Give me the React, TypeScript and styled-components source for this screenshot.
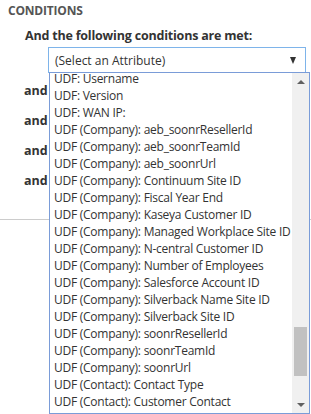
import React from 'react';
import styled, { createGlobalStyle } from 'styled-components';

const GlobalStyle = createGlobalStyle`
  html, body {
    margin: 0;
    padding: 0;
    background: #ffffff;
    font-family: "Open Sans", "Noto Sans", Arial, sans-serif;
    overflow: hidden;
  }
`;

const Page = styled.div`
  width: 311px;
  height: 414px;
  position: relative;
  overflow: hidden;
`;

const SectionTitle = styled.h2`
  margin: 0;
  padding: 2px 0 0 8px;
  height: 20px;
  font-size: 12px;
  font-weight: 700;
  color: #555555;
  letter-spacing: -0.2px;
`;

const Subtitle = styled.h3`
  margin: 0;
  padding: 5px 0 0 25px;
  height: 20px;
  font-size: 12.5px;
  font-weight: 700;
  color: #333333;
  letter-spacing: -0.2px;
`;

const SelectArea = styled.div`
  position: relative;
  margin: 0 0 0 48px;
  width: 258px;
`;

const SelectBox = styled.div`
  box-sizing: border-box;
  height: 26px;
  border: 1px solid #7eb4ea;
  display: flex;
  align-items: center;
  justify-content: space-between;
  padding: 0 6px 0 6px;
  font-size: 12px;
  color: #333333;
  background: #ffffff;
`;

const Caret = styled.span`
  width: 0;
  height: 0;
  border-left: 3.5px solid transparent;
  border-right: 3.5px solid transparent;
  border-top: 7px solid #333333;
  margin-right: 3px;
`;

const Dropdown = styled.div`
  position: absolute;
  z-index: 10;
  left: 1px;
  top: 25px;
  width: 261px;
  height: 342px;
  box-sizing: border-box;
  border: 1px solid #7a9cd8;
  background: #ffffff;
  display: flex;
  overflow: hidden;
`;

const OptionList = styled.ul`
  list-style: none;
  margin: -3px 0 0 0;
  padding: 0;
  flex: 1;
  overflow: hidden;
`;

const OptionItem = styled.li`
  height: 17px;
  line-height: 17px;
  padding-left: 4px;
  font-size: 12px;
  color: #333333;
  white-space: nowrap;
  letter-spacing: -0.25px;
`;

const Scrollbar = styled.div`
  width: 17px;
  background: #f0f0f0;
  display: flex;
  flex-direction: column;
  align-items: center;
`;

const ScrollArrow = styled.div<{ $up?: boolean }>`
  height: 17px;
  display: flex;
  align-items: center;
  justify-content: center;
  &::after {
    content: '';
    width: 0;
    height: 0;
    border-left: 4px solid transparent;
    border-right: 4px solid transparent;
    ${(p) => (p.$up ? 'border-bottom: 4px solid #606060;' : 'border-top: 4px solid #606060;')}
  }
`;

const Track = styled.div`
  flex: 1;
  width: 100%;
  display: flex;
  flex-direction: column;
  align-items: center;
`;

const Thumb = styled.div`
  width: 13px;
  height: 49px;
  margin-top: 237px;
  background: #c1c1c1;
`;

const Rows = styled.div`
  padding-top: 2px;
`;

const ConditionRow = styled.div`
  height: 30px;
  display: flex;
  align-items: center;
  padding-left: 24px;
  gap: 5px;
`;

const AndLabel = styled.span`
  width: 21px;
  font-size: 12.5px;
  font-weight: 700;
  color: #333333;
`;

const RowSelect = styled.div`
  width: 258px;
  height: 24px;
  border: 1px solid #cccccc;
`;

const Divider = styled.hr`
  margin: 24px 0 0 0;
  border: 0;
  border-top: 1px solid #cccccc;
`;

const options = [
  'UDF: Username',
  'UDF: Version',
  'UDF: WAN IP:',
  'UDF (Company): aeb_soonrResellerId',
  'UDF (Company): aeb_soonrTeamId',
  'UDF (Company): aeb_soonrUrl',
  'UDF (Company): Continuum Site ID',
  'UDF (Company): Fiscal Year End',
  'UDF (Company): Kaseya Customer ID',
  'UDF (Company): Managed Workplace Site ID',
  'UDF (Company): N-central Customer ID',
  'UDF (Company): Number of Employees',
  'UDF (Company): Salesforce Account ID',
  'UDF (Company): Silverback Name Site ID',
  'UDF (Company): Silverback Site ID',
  'UDF (Company): soonrResellerId',
  'UDF (Company): soonrTeamId',
  'UDF (Company): soonrUrl',
  'UDF (Contact): Contact Type',
  'UDF (Contact): Customer Contact',
];

const App: React.FC = () => (
  <Page>
    <GlobalStyle />
    <SectionTitle>CONDITIONS</SectionTitle>
    <Subtitle>And the following conditions are met:</Subtitle>
    <SelectArea>
      <SelectBox>
        <span>(Select an Attribute)</span>
        <Caret />
      </SelectBox>
      <Dropdown>
        <OptionList>
          {options.map((o) => (
            <OptionItem key={o}>{o}</OptionItem>
          ))}
        </OptionList>
        <Scrollbar>
          <ScrollArrow $up />
          <Track>
            <Thumb />
          </Track>
          <ScrollArrow />
        </Scrollbar>
      </Dropdown>
    </SelectArea>
    <Rows>
      {[0, 1, 2, 3].map((i) => (
        <ConditionRow key={i}>
          <AndLabel>and</AndLabel>
          <RowSelect />
        </ConditionRow>
      ))}
    </Rows>
    <Divider />
  </Page>
);

export default App;
